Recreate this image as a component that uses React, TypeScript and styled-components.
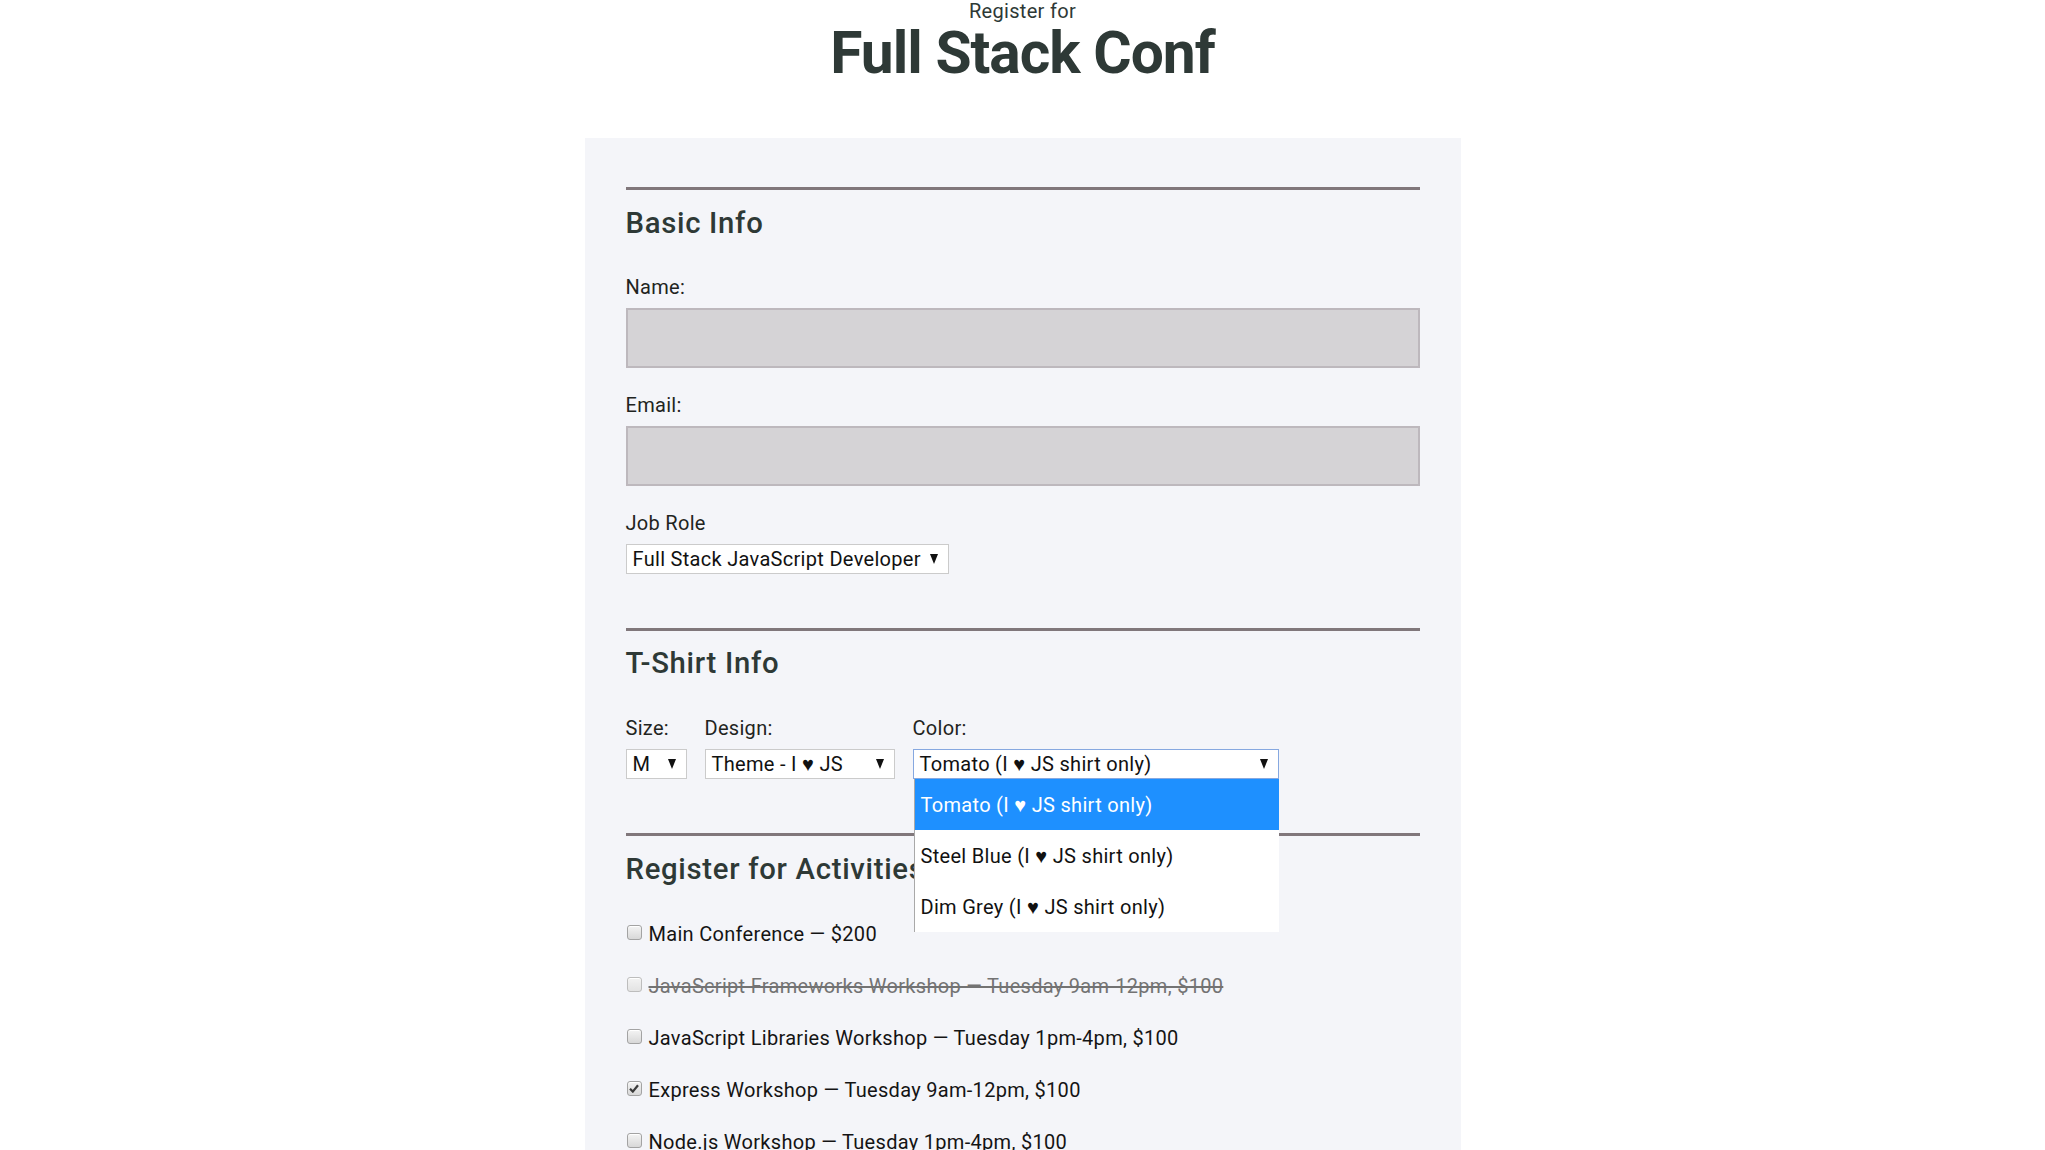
import React from "react";
import styled, { createGlobalStyle, css } from "styled-components";

const GlobalStyle = createGlobalStyle`
  html, body {
    margin: 0;
    padding: 0;
    background: #ffffff;
    overflow: hidden;
  }
  body {
    font-family: Roboto, "Liberation Sans", "DejaVu Sans", sans-serif;
    color: #2e3936;
  }
  * { box-sizing: border-box; }
`;

const Header = styled.header`
  padding-top: 1px;
  text-align: center;
  color: #2e3936;
`;

const Kicker = styled.span`
  display: block;
  font-size: 20px;
  line-height: 1;
  font-weight: 400;
  letter-spacing: 0.3px;
`;

const Title = styled.h1`
  margin: 3.4px 0 0;
  font-size: 58.7px;
  line-height: 1;
  font-weight: 700;
  letter-spacing: -1px;
`;

const Panel = styled.form`
  width: 876px;
  margin: 54.7px auto 0;
  padding: 49px 41px 60px;
  background: #f4f5f9;
`;

const Section = styled.fieldset`
  margin: 0 0 53.8px;
  padding: 18.8px 0 0;
  border: 0;
  border-top: 3px solid #80777b;
  min-width: 0;
`;

const SectionTitle = styled.h2`
  margin: 0 0 39.3px;
  font-size: 29.3px;
  line-height: 1;
  font-weight: 500;
  letter-spacing: 0.7px;
  color: #2e3936;
`;

const Label = styled.label`
  display: block;
  font-size: 20px;
  line-height: 1;
  letter-spacing: 0.3px;
  color: #1f2421;
  margin-bottom: 11.3px;
`;

const TextInput = styled.input`
  display: block;
  width: 100%;
  height: 60px;
  margin: 0 0 26.4px;
  background: #d5d3d6;
  border: 2px solid #bdb8bd;
  outline: none;
  font: inherit;
`;

const SelectBox = styled.div<{ $width: number; $focused?: boolean }>`
  display: flex;
  align-items: center;
  justify-content: space-between;
  width: ${(p) => p.$width}px;
  height: 30px;
  padding: 0 10px 0 6px;
  background: #ffffff;
  border: 1px solid ${(p) => (p.$focused ? "#86a8e0" : "#cbcbcb")};
  font-size: 20px;
  line-height: 1;
  letter-spacing: 0.3px;
  color: #111111;
  white-space: nowrap;
`;

const Arrow = styled.svg`
  flex: none;
  width: 8px;
  height: 10px;
  margin-left: 8px;
`;

const Row = styled.div`
  display: flex;
  gap: 18px;
`;

const Column = styled.div`
  position: relative;
  display: flex;
  flex-direction: column;
`;

const Dropdown = styled.ul`
  position: absolute;
  top: 100%;
  left: 1px;
  right: 0;
  margin: 0;
  padding: 0;
  list-style: none;
  background: #ffffff;
  border-left: 1px solid #a9a9a9;
  z-index: 2;
`;

const Option = styled.li<{ $active?: boolean }>`
  display: flex;
  align-items: center;
  height: 51px;
  padding-left: 6px;
  font-size: 20px;
  line-height: 1;
  letter-spacing: 0.3px;
  color: #111111;
  ${(p) =>
    p.$active &&
    css`
      background: #1e90ff;
      color: #ffffff;
    `}
`;

const Activity = styled.label<{ $disabled?: boolean }>`
  display: flex;
  align-items: flex-start;
  gap: 7px;
  font-size: 20px;
  line-height: 20px;
  height: 20px;
  letter-spacing: 0.3px;
  margin-bottom: 32px;
  color: ${(p) => (p.$disabled ? "#737373" : "#141414")};
  text-decoration: ${(p) => (p.$disabled ? "line-through" : "none")};
  white-space: nowrap;
`;

const Box = styled.span<{ $disabled?: boolean }>`
  flex: none;
  display: flex;
  align-items: center;
  justify-content: center;
  width: 15px;
  height: 15px;
  margin: 1px 0 0 1px;
  border: 1px solid ${(p) => (p.$disabled ? "#bdbdbd" : "#a3a3a3")};
  border-radius: 3px;
  background: ${(p) =>
    p.$disabled
      ? "linear-gradient(#f3f3f3, #e3e3e3)"
      : "linear-gradient(#f4f4f4, #d8d8d8)"};
  box-shadow: inset 0 1px 0 #ffffff;
`;

const DownArrow = () => (
  <Arrow viewBox="0 0 8 10" aria-hidden="true">
    <polygon points="0,0 8,0 4,10" fill="#111" />
  </Arrow>
);

const Select = ({
  value,
  width,
  focused,
}: {
  value: string;
  width: number;
  focused?: boolean;
}) => (
  <SelectBox $width={width} $focused={focused} role="combobox">
    <span>{value}</span>
    <DownArrow />
  </SelectBox>
);

const Checkbox = ({ checked, disabled }: { checked?: boolean; disabled?: boolean }) => (
  <Box $disabled={disabled}>
    {checked && (
      <svg width="10" height="9" viewBox="0 0 10 9" aria-hidden="true">
        <path d="M1 4.8 L3.8 7.6 L9 1.2" fill="none" stroke="#3a3a3a" strokeWidth="2.2" />
      </svg>
    )}
  </Box>
);

const activities = [
  { text: "Main Conference — $200" },
  { text: "JavaScript Frameworks Workshop — Tuesday 9am-12pm, $100", disabled: true },
  { text: "JavaScript Libraries Workshop — Tuesday 1pm-4pm, $100" },
  { text: "Express Workshop — Tuesday 9am-12pm, $100", checked: true },
  { text: "Node.js Workshop — Tuesday 1pm-4pm, $100" },
];

const colorOptions = [
  "Tomato (I ♥ JS shirt only)",
  "Steel Blue (I ♥ JS shirt only)",
  "Dim Grey (I ♥ JS shirt only)",
];

export default function App() {
  return (
    <>
      <GlobalStyle />
      <Header>
        <Kicker>Register for</Kicker>
        <Title>Full Stack Conf</Title>
      </Header>
      <Panel onSubmit={(e) => e.preventDefault()}>
        <Section>
          <SectionTitle>Basic Info</SectionTitle>
          <Label htmlFor="name">Name:</Label>
          <TextInput id="name" type="text" />
          <Label htmlFor="mail">Email:</Label>
          <TextInput id="mail" type="email" />
          <Label>Job Role</Label>
          <Select value="Full Stack JavaScript Developer" width={323} />
        </Section>

        <Section>
          <SectionTitle>T-Shirt Info</SectionTitle>
          <Row>
            <Column>
              <Label>Size:</Label>
              <Select value="M" width={61} />
            </Column>
            <Column>
              <Label>Design:</Label>
              <Select value="Theme - I ♥ JS" width={190} />
            </Column>
            <Column>
              <Label>Color:</Label>
              <Select value="Tomato (I ♥ JS shirt only)" width={366} focused />
              <Dropdown role="listbox">
                {colorOptions.map((o, i) => (
                  <Option key={o} $active={i === 0}>
                    {o}
                  </Option>
                ))}
              </Dropdown>
            </Column>
          </Row>
        </Section>

        <Section>
          <SectionTitle>Register for Activities</SectionTitle>
          {activities.map((a) => (
            <Activity key={a.text} $disabled={a.disabled}>
              <Checkbox checked={a.checked} disabled={a.disabled} />
              <span>{a.text}</span>
            </Activity>
          ))}
        </Section>
      </Panel>
    </>
  );
}
